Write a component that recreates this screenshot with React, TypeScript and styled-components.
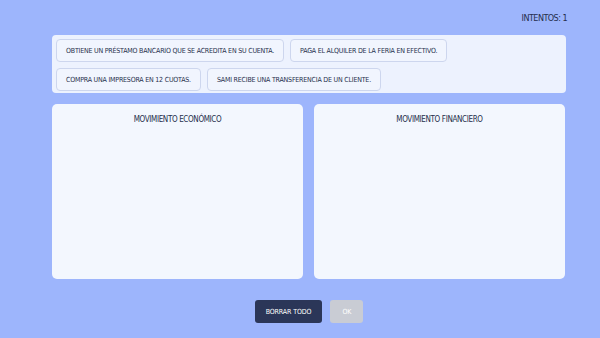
import styled, { createGlobalStyle } from "styled-components";

const GlobalStyle = createGlobalStyle`
  html, body {
    margin: 0;
    padding: 0;
    background: #9db5fc;
  }
  body {
    font-family: "DejaVu Sans Condensed", "Liberation Sans", sans-serif;
    color: #262f4c;
  }
`;

const Page = styled.div`
  width: 600px;
  height: 338px;
  box-sizing: border-box;
  padding: 0 34px 0 52px;
  display: flex;
  flex-direction: column;
`;

const TopBar = styled.div`
  height: 35px;
  display: flex;
  justify-content: flex-end;
  align-items: center;
  padding-top: 1px;
  box-sizing: border-box;
`;

const Attempts = styled.span`
  font-size: 9px;
  letter-spacing: -0.55px;
  margin-right: -1px;
`;

const Bank = styled.div`
  background: #edf2fe;
  border-radius: 4px;
  padding: 4px 4px 3px;
  display: flex;
  flex-wrap: wrap;
  gap: 6px;
  height: 58px;
  box-sizing: border-box;
  align-content: flex-start;
`;

const Chip = styled.div`
  height: 23px;
  box-sizing: border-box;
  padding: 0 9px;
  display: flex;
  align-items: center;
  border: 1px solid #cdd6ee;
  border-radius: 4px;
  background: #f1f5fe;
  font-size: 7px;
  letter-spacing: -0.2px;
  white-space: nowrap;
`;

const Columns = styled.div`
  margin-top: 11px;
  display: grid;
  grid-template-columns: 251px 251px;
  gap: 11px;
`;

const Panel = styled.div`
  height: 175px;
  background: #f3f7fe;
  border-radius: 5px;
  display: flex;
  flex-direction: column;
  align-items: center;
  padding-top: 11px;
  box-sizing: border-box;
`;

const PanelTitle = styled.div`
  font-size: 8px;
  letter-spacing: -0.35px;
`;

const Actions = styled.div`
  margin-top: 21px;
  display: flex;
  justify-content: center;
  gap: 8px;
`;

const Button = styled.button<{ $disabled?: boolean }>`
  height: 23px;
  padding: 0 ${(p) => (p.$disabled ? "12px" : "11px")};
  border: none;
  border-radius: 3px;
  font-family: inherit;
  font-size: 7px;
  letter-spacing: -0.1px;
  color: #ffffff;
  background: ${(p) => (p.$disabled ? "#c9ccd4" : "#2b3658")};
  cursor: ${(p) => (p.$disabled ? "default" : "pointer")};
`;

const options = [
  "OBTIENE UN PRÉSTAMO BANCARIO QUE SE ACREDITA EN SU CUENTA.",
  "PAGA EL ALQUILER DE LA FERIA EN EFECTIVO.",
  "COMPRA UNA IMPRESORA EN 12 CUOTAS.",
  "SAMI RECIBE UNA TRANSFERENCIA DE UN CLIENTE.",
];

function App() {
  return (
    <>
      <GlobalStyle />
      <Page>
        <TopBar>
          <Attempts>INTENTOS: 1</Attempts>
        </TopBar>
        <Bank>
          {options.map((o) => (
            <Chip key={o}>{o}</Chip>
          ))}
        </Bank>
        <Columns>
          <Panel>
            <PanelTitle>MOVIMIENTO ECONÓMICO</PanelTitle>
          </Panel>
          <Panel>
            <PanelTitle>MOVIMIENTO FINANCIERO</PanelTitle>
          </Panel>
        </Columns>
        <Actions>
          <Button>BORRAR TODO</Button>
          <Button $disabled>OK</Button>
        </Actions>
      </Page>
    </>
  );
}

export default App;
